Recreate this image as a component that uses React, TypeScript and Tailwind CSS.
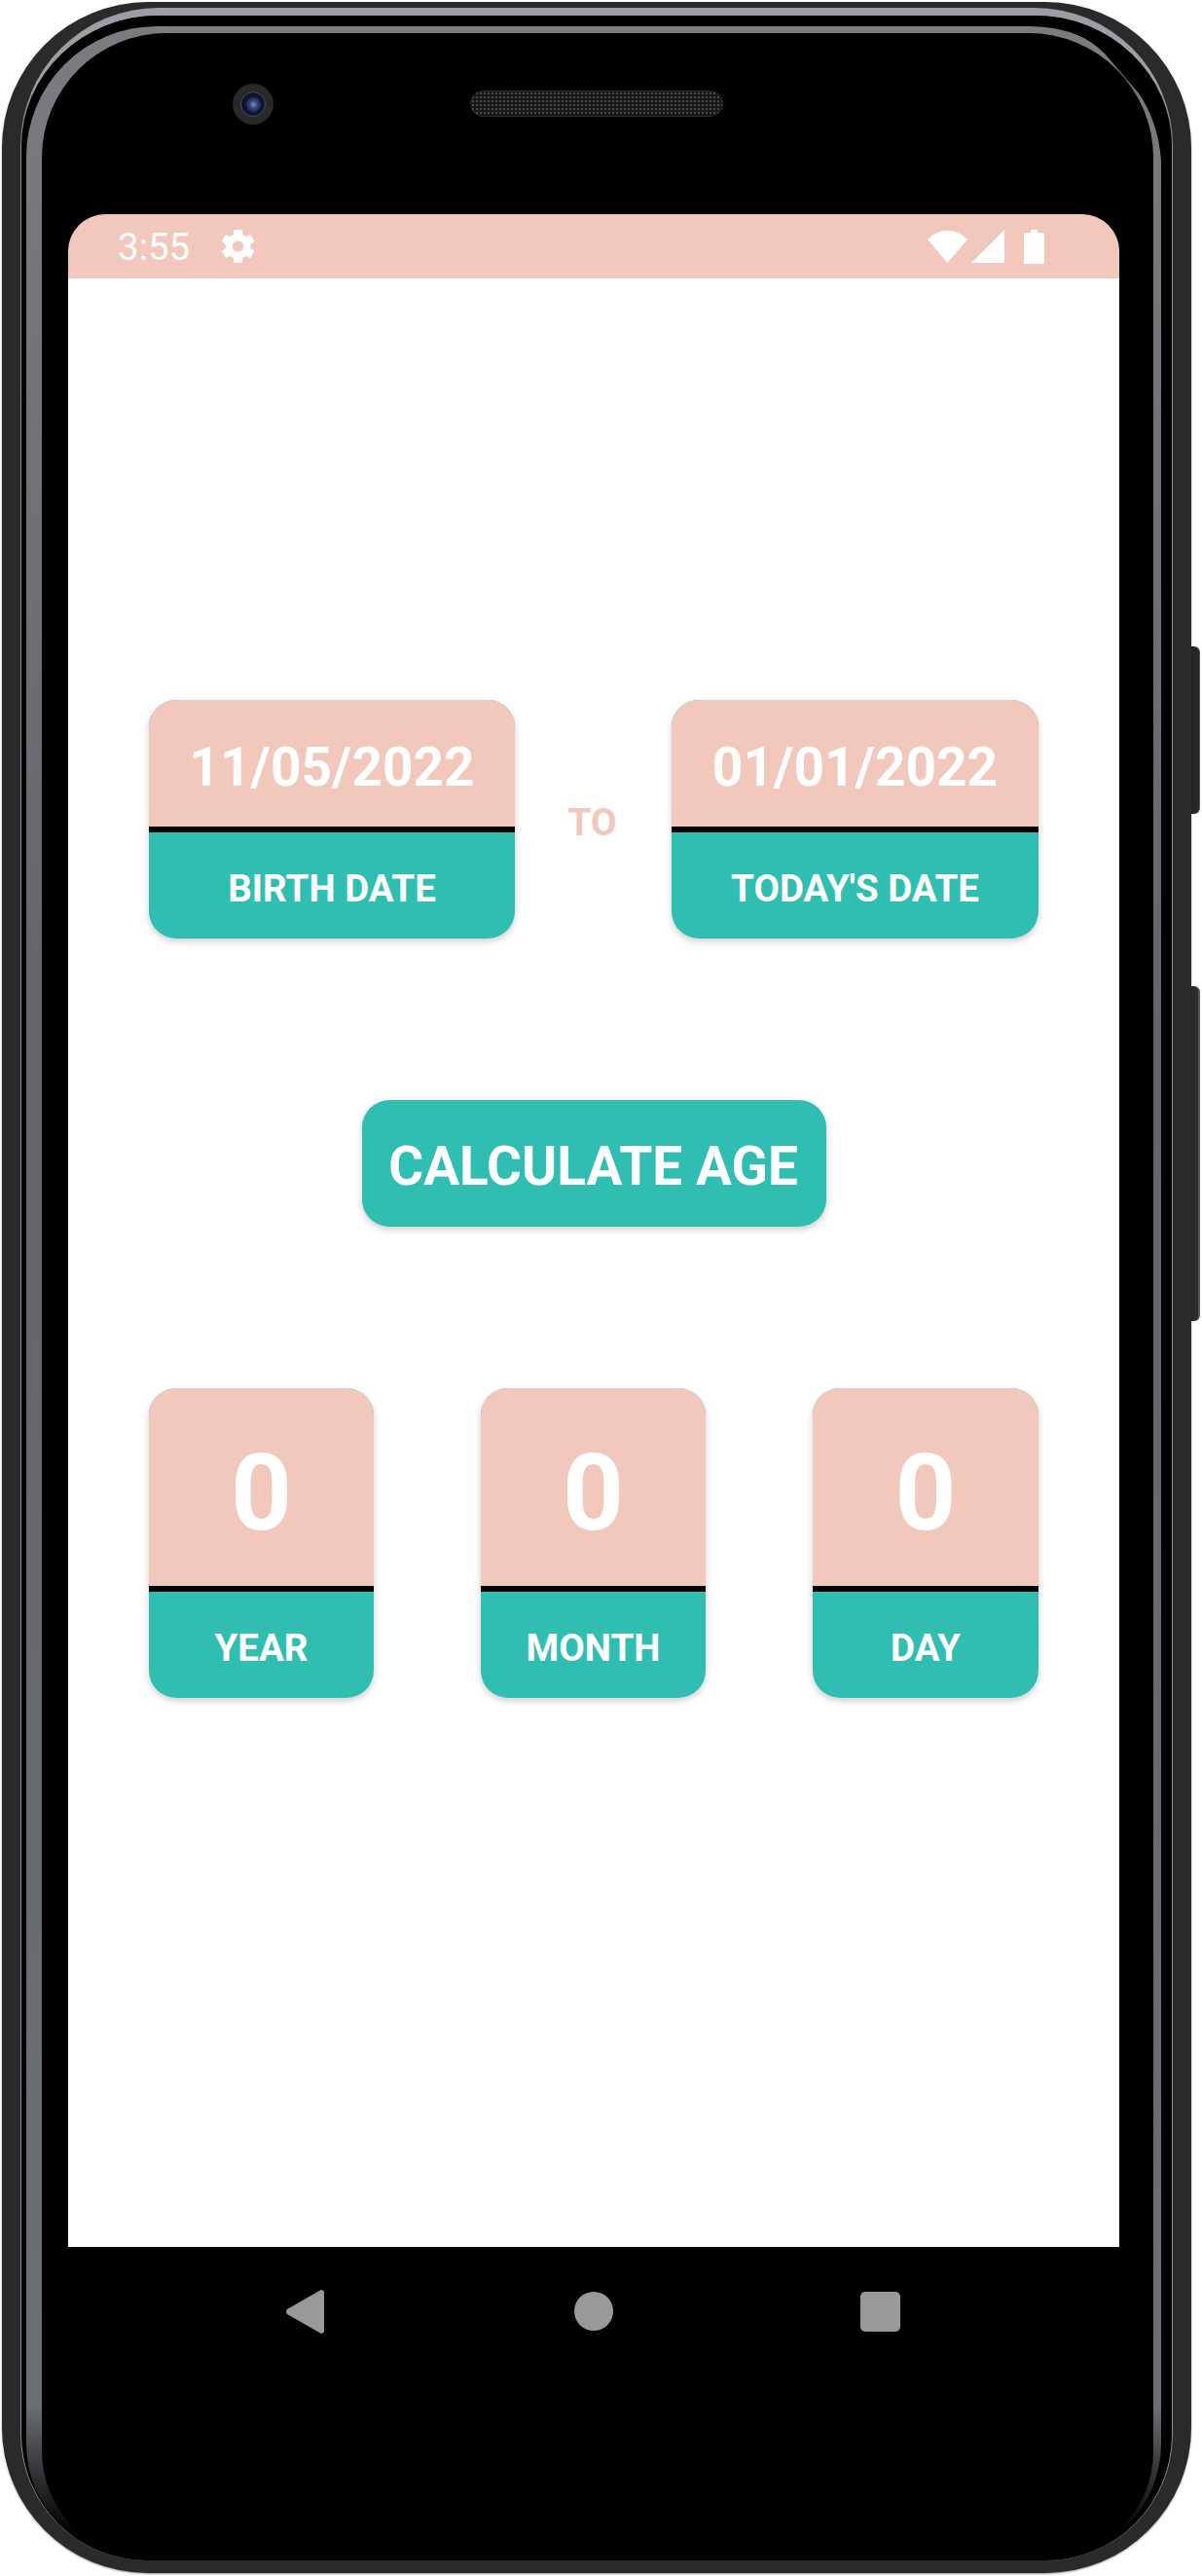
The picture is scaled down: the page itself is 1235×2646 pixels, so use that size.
import React from 'react';

const Card = ({ value, label, wide, width }: { value: string; label: string; wide?: boolean; width: string }) => (
  <div className={`flex flex-col overflow-hidden rounded-[28px] bg-[#30beb2] font-bold text-white shadow-[0_3px_7px_rgba(0,0,0,0.2)] ${width} ${wide ? 'h-[245px]' : 'h-[318px]'}`}>
    <div className={`flex items-center justify-center border-b-[6px] border-black bg-[#f2c8bd] ${wide ? 'h-[136px] pt-[8px] text-[55px]' : 'h-[209px] pt-[12px] text-[110px]'}`}>{value}</div>
    <div className="flex flex-1 items-center justify-center pt-[6px] text-[38.5px]">{label}</div>
  </div>
);

export default function App() {
  return (
    <div className="relative h-[2646px] w-[1235px] bg-white pl-[2px] pt-[2px] font-['Roboto',sans-serif]">
      <div className="absolute left-[1223px] top-[664px] h-[172px] w-[10px] rounded-r-[6px] border-r border-[#555] bg-[#262626]" />
      <div className="absolute left-[1222px] top-[1013px] h-[344px] w-[11px] rounded-r-[6px] border-r-2 border-[#555] bg-[#2c2c2c]" />

      {/* phone body, nested rings */}
      <div className="relative h-[2641px] w-[1222px] rounded-[150px] bg-[#2a2a2a] px-[19px] pt-[6px] shadow-[0_1px_2px_rgba(0,0,0,0.4)]">
        <div className="h-[2622px] w-[1184px] rounded-t-[142px] rounded-b-[130px] border-x border-t-[8px] border-x-[#8a8c8f] border-t-[#9b9ea2] bg-black px-[1px] pt-0">
          <div className="h-[2612px] w-full rounded-t-[138px] rounded-b-[125px] bg-black pl-[4px] pr-[10px] pt-[11px]">
            <div className="h-[2601px] w-full rounded-t-[134px] rounded-b-[118px] bg-[linear-gradient(180deg,#7a7c80_0%,#63656a_40%,#6b6e73_94%,#2a2b2d_97%,#000_99%)] pl-[16px] pr-[8px] pt-[7px]">
              <div className="flex h-[2594px] w-full flex-col rounded-t-[128px] rounded-b-[110px] bg-black pl-[27px] pr-[35px]">
                <div className="flex h-[186px] shrink-0 items-start pl-[169px] pt-[52px]">
                  <div className="flex h-[42px] w-[42px] shrink-0 items-center justify-center rounded-full bg-[#28282a]">
                    <div className="flex h-[26px] w-[26px] items-center justify-center rounded-full border border-[#4a4d58] bg-[#10142c]">
                      <div className="h-[15px] w-[15px] rounded-full bg-[radial-gradient(circle,#7f8cb8_0%,#2a3a74_45%,#141c44_100%)]" />
                    </div>
                  </div>
                  <div className="ml-[202px] mt-[7px] h-[27px] w-[260px] rounded-full border border-[#2c2c2c] bg-[#181818] bg-[radial-gradient(#4a4a4a_1px,transparent_1px)] bg-[length:4px_4px]" />
                </div>

                <div className="flex h-[2088px] shrink-0 flex-col">
                  <div className="flex h-[66px] shrink-0 items-center rounded-t-[38px] bg-[#f2c8bd] pl-[51px] text-white">
                    <span className="pt-[2px] text-[38.5px] leading-none">3:55</span>
                    <svg className="ml-[30px]" width="40" height="40" viewBox="0 0 24 24" fill="#fff"><path d="M19.4 13c.04-.32.06-.66.06-1s-.02-.68-.07-1l2.16-1.68a.5.5 0 0 0 .12-.64l-2.05-3.55a.5.5 0 0 0-.62-.22l-2.55 1.03a7.6 7.6 0 0 0-1.73-1l-.39-2.71A.5.5 0 0 0 13.83 1.8H9.73a.5.5 0 0 0-.5.43l-.38 2.71c-.63.26-1.2.6-1.74 1L4.56 4.91a.5.5 0 0 0-.61.22L1.9 8.68a.49.49 0 0 0 .12.64L4.18 11c-.05.32-.08.67-.08 1s.02.68.07 1l-2.16 1.68a.5.5 0 0 0-.12.64l2.05 3.55c.13.22.39.3.62.22l2.55-1.03c.54.41 1.11.75 1.74 1l.38 2.71c.05.25.25.43.5.43h4.1c.25 0 .46-.18.49-.43l.39-2.71a7.6 7.6 0 0 0 1.73-1l2.55 1.03c.23.08.49 0 .62-.22l2.05-3.55a.49.49 0 0 0-.12-.64L19.4 13zM11.78 15.5a3.5 3.5 0 1 1 0-7 3.5 3.5 0 0 1 0 7z" /></svg>
                    <div className="ml-auto flex items-center pr-[77px]">
                      <svg width="41" height="35" viewBox="0 0 41 35" fill="#fff"><path d="M20.5 34 0 10C6 4 12.5 1 20.5 1S35 4 41 10z" /></svg>
                      <svg className="ml-[4px]" width="34" height="34" viewBox="0 0 34 34" fill="#fff"><path d="M34 0v34H0z" /></svg>
                      <svg className="ml-[20px]" width="21" height="35" viewBox="0 0 21 35" fill="#fff"><path d="M7 0h7v3h5.500q1.500 0 1.500 1.500V33.500q0 1.500-1.500 1.500h-18Q0 35 0 33.500V4.500Q0 3 1.500 3H7z" /></svg>
                    </div>
                  </div>

                  <div className="flex flex-1 flex-col items-center bg-white px-[83px] pt-[433px]">
                    <div className="flex w-full items-center justify-between">
                      <Card wide width="w-[376px]" value="11/05/2022" label="BIRTH DATE" />
                      <span className="block pr-[2px] pt-[6px] text-[38.5px] font-bold text-[#f2c8bd]">TO</span>
                      <Card wide width="w-[377px]" value="01/01/2022" label="TODAY'S DATE" />
                    </div>
                    <div className="mt-[166px] flex h-[130px] w-[477px] items-center justify-center rounded-[28px] bg-[#30beb2] pr-[1px] pt-[7px] text-[55px] font-bold text-white shadow-[0_3px_7px_rgba(0,0,0,0.2)]">CALCULATE AGE</div>
                    <div className="mt-[166px] flex w-full justify-between">
                      <Card width="w-[231px]" value="0" label="YEAR" />
                      <Card width="w-[231px]" value="0" label="MONTH" />
                      <Card width="w-[232px]" value="0" label="DAY" />
                    </div>
                  </div>
                </div>

                <div className="flex flex-1 items-start pl-[224px] pt-[44px]">
                  <svg width="39" height="45" viewBox="0 0 39 45" fill="#999"><path d="M1 20 35 .6Q39-.8 39 3v39q0 3.800-4 2.400L1 25q-2-2.500 0-5z" /></svg>
                  <div className="ml-[257px] mt-[2px] h-[40px] w-[40px] rounded-full bg-[#999]" />
                  <div className="ml-[254px] mt-[2px] h-[41px] w-[41px] rounded-[5px] bg-[#999]" />
                </div>
              </div>
            </div>
          </div>
        </div>
      </div>

      {/* gloss gap on the top right corner of the grey band */}
      <svg className="absolute left-[1060px] top-[20px]" width="140" height="150" viewBox="1060 20 140 150" fill="#000"><path d="M1068 25A136 136 0 0 1 1195 161L1193 165Q1190 125 1170 96L1135 55Q1110 30 1068 25z" /></svg>
    </div>
  );
}
